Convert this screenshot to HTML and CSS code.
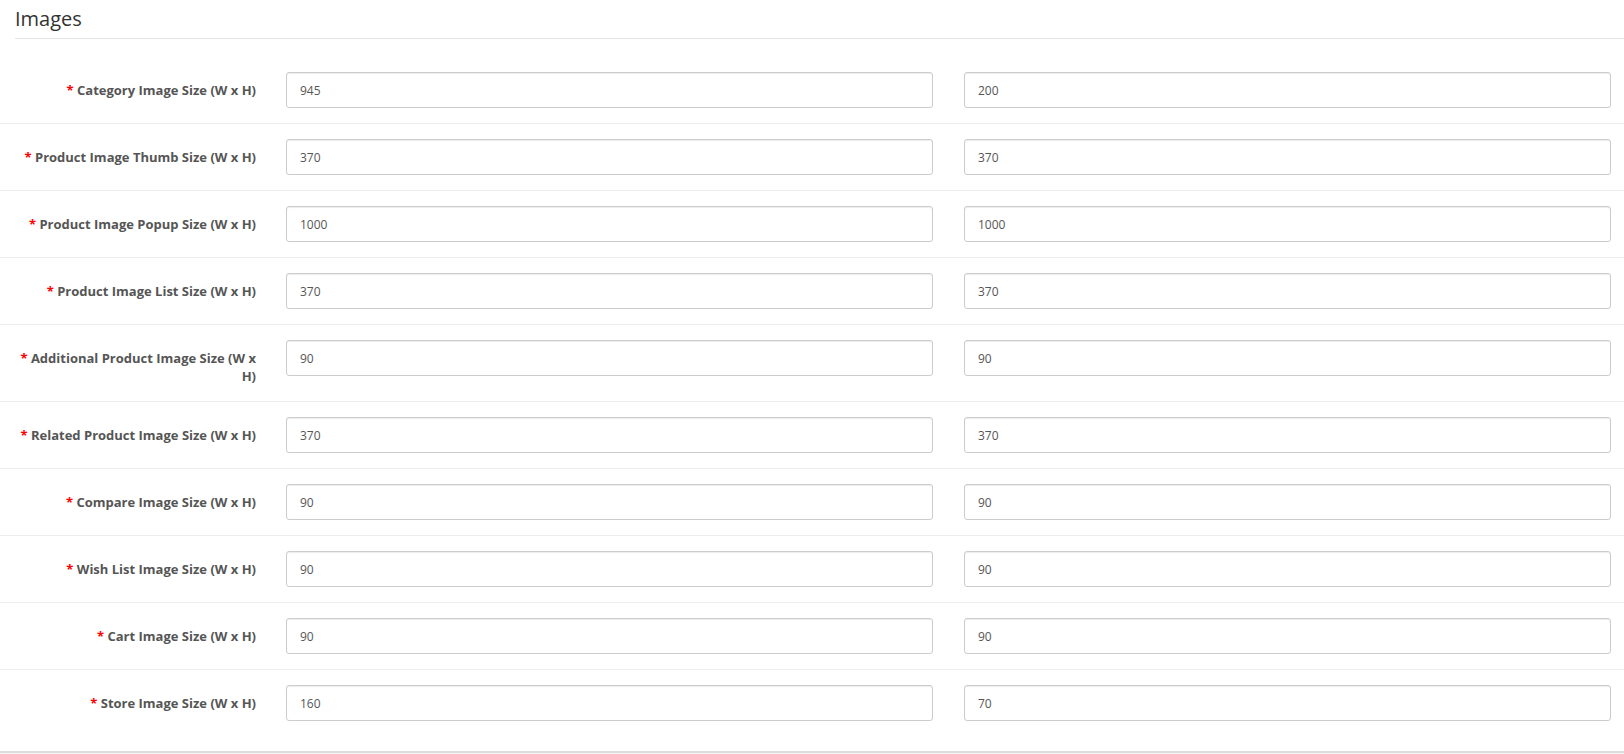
FILE: index.html
```html
<!DOCTYPE html>
<html lang="en">
<head>
<meta charset="utf-8">
<title>Images</title>
<link rel="stylesheet" href="styles.css">
</head>
<body>
<div class="panel">
  <fieldset class="fieldset">
    <legend class="legend">Images</legend>
    <div class="form-group">
      <label class="control-label"><span class="req">*</span> Category Image Size (W x H)</label>
      <div class="inputs"><input class="form-control" type="text" value="945"><input class="form-control" type="text" value="200"></div>
    </div>
    <div class="form-group">
      <label class="control-label"><span class="req">*</span> Product Image Thumb Size (W x H)</label>
      <div class="inputs"><input class="form-control" type="text" value="370"><input class="form-control" type="text" value="370"></div>
    </div>
    <div class="form-group">
      <label class="control-label"><span class="req">*</span> Product Image Popup Size (W x H)</label>
      <div class="inputs"><input class="form-control" type="text" value="1000"><input class="form-control" type="text" value="1000"></div>
    </div>
    <div class="form-group">
      <label class="control-label"><span class="req">*</span> Product Image List Size (W x H)</label>
      <div class="inputs"><input class="form-control" type="text" value="370"><input class="form-control" type="text" value="370"></div>
    </div>
    <div class="form-group">
      <label class="control-label"><span class="req">*</span> Additional Product Image Size (W x H)</label>
      <div class="inputs"><input class="form-control" type="text" value="90"><input class="form-control" type="text" value="90"></div>
    </div>
    <div class="form-group">
      <label class="control-label"><span class="req">*</span> Related Product Image Size (W x H)</label>
      <div class="inputs"><input class="form-control" type="text" value="370"><input class="form-control" type="text" value="370"></div>
    </div>
    <div class="form-group">
      <label class="control-label"><span class="req">*</span> Compare Image Size (W x H)</label>
      <div class="inputs"><input class="form-control" type="text" value="90"><input class="form-control" type="text" value="90"></div>
    </div>
    <div class="form-group">
      <label class="control-label"><span class="req">*</span> Wish List Image Size (W x H)</label>
      <div class="inputs"><input class="form-control" type="text" value="90"><input class="form-control" type="text" value="90"></div>
    </div>
    <div class="form-group">
      <label class="control-label"><span class="req">*</span> Cart Image Size (W x H)</label>
      <div class="inputs"><input class="form-control" type="text" value="90"><input class="form-control" type="text" value="90"></div>
    </div>
    <div class="form-group">
      <label class="control-label"><span class="req">*</span> Store Image Size (W x H)</label>
      <div class="inputs"><input class="form-control" type="text" value="160"><input class="form-control" type="text" value="70"></div>
    </div>
  </fieldset>
</div>
<div class="panel-foot"></div>
</body>
</html>
```

FILE: styles.css
```css
html, body {
  margin: 0;
  padding: 0;
  background: #ffffff;
  overflow: hidden;
}
body {
  font-family: "Open Sans", "Liberation Sans", sans-serif;
  font-size: 12px;
  color: #555555;
}
.panel {
  padding-bottom: 15px;
}
.fieldset {
  margin: 0;
  padding: 0;
  border: 0;
  min-width: 0;
}
.legend {
  display: block;
  width: calc(100% - 15px);
  box-sizing: border-box;
  margin: 0 0 18px 15px;
  padding: 5px 0 5px 0;
  font-size: 20px;
  line-height: 28px;
  font-weight: 400;
  color: #333333;
  border-bottom: 1px solid #e5e5e5;
}
.form-group {
  display: flex;
  align-items: flex-start;
  padding: 15px 0;
  border-top: 1px solid #ededed;
}
.form-group:first-of-type {
  border-top: 0;
}
.control-label {
  flex: 0 0 256px;
  box-sizing: border-box;
  padding: 9px 0 1px 15px;
  text-align: right;
  font-weight: 700;
  font-size: 13px;
  line-height: 18px;
  color: #555555;
}
.req {
  color: #ff0000;
  font-weight: 700;
}
.inputs {
  flex: 1 1 auto;
  display: grid;
  grid-template-columns: 1fr 1fr;
  column-gap: 31px;
  padding: 0 13px 0 30px;
}
.form-control {
  display: block;
  width: 100%;
  box-sizing: border-box;
  height: 36px;
  margin: 0;
  padding: 8px 13px;
  font-family: "Open Sans", "Liberation Sans", sans-serif;
  font-size: 12px;
  line-height: 18px;
  color: #555555;
  background: #ffffff;
  border: 1px solid #cccccc;
  border-radius: 3px;
  box-shadow: inset 0 1px 1px rgba(0, 0, 0, 0.075);
  outline: none;
}
.panel-foot {
  height: 20px;
  border-top: 2px solid #dddddd;
  background: #f5f5f5;
}
```
